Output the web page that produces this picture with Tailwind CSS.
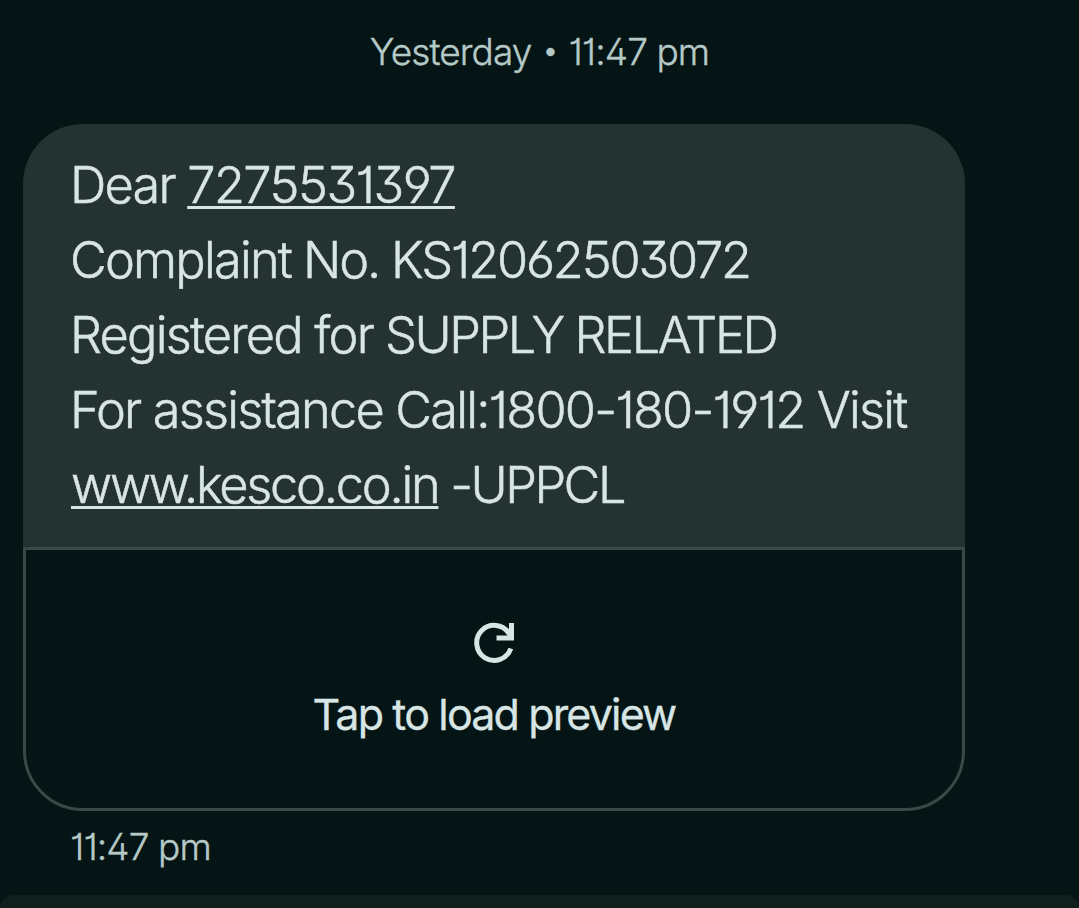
<!DOCTYPE html>
<html lang="en">
  <head>
    <meta charset="utf-8" />
    <meta content="width=device-width, initial-scale=1.0" name="viewport" />
    <title>Messages</title>
    <script src="https://cdn.jsdelivr.net/npm/@tailwindcss/browser@4"></script>
  </head>
  <body class="bg-[#051414] h-[908px] overflow-hidden flex flex-col font-['Inter',sans-serif] [font-feature-settings:'ss01','cv01','cv09']">
    <div class="pt-7 h-[124px] shrink-0 text-center text-[37px] leading-[48px] font-light text-[#b5c9c7] tracking-[-0.9px] [-webkit-text-stroke:0.4px]">
      Yesterday <span class="text-[30px] leading-none align-[4px] mx-px">•</span> 11:47 pm
    </div>
    <main class="ml-[23px] w-[942px] shrink-0">
      <div class="h-[423px] bg-[#253232] rounded-t-[60px] pl-12 pt-[23px] text-[50.5px] leading-[75px] font-light text-[#d7e5e4] whitespace-nowrap [-webkit-text-stroke:0.5px]">
        <p class="-ml-px tracking-[-1.8px]">Dear <a class="tracking-[-1.55px] underline decoration-[3px] underline-offset-[3px] [text-decoration-skip-ink:none]">7275531397</a></p>
        <p class="-ml-px tracking-[-2.2px]"><span class="tracking-[-1.8px]">Complaint</span> No. KS12062503072</p>
        <p class="-ml-px tracking-[-2.4px]"><span class="tracking-[-1.8px]">Registered for</span> SUPPLY RELATED</p>
        <p class="-ml-px tracking-[-1.8px]">For assistance Call:1800-180-1912 Visit</p>
        <p class="tracking-[-2.5px]"><a class="tracking-[-2.25px] underline decoration-[3px] underline-offset-[3px] [text-decoration-skip-ink:none]">www.kesco.co.in</a> -UPPCL</p>
      </div>
      <div class="h-[264px] border-[3px] border-[#394948] rounded-b-[60px] flex flex-col items-center pt-[67px] text-[#d7e5e4]">
        <svg class="w-[60px] h-[52px]" viewBox="464 617 60 52" fill="none" stroke="currentColor" stroke-width="5">
          <path d="M510.800 648.500A17.500 17.500 0 1 1 509 633.500L512 637.500" />
          <path d="M511.500 623V638H496.500" />
        </svg>
        <p class="mt-[15px] text-[43px] leading-[60px] tracking-[-1.85px] [-webkit-text-stroke:0.3px]">Tap to load preview</p>
      </div>
    </main>
    <p class="ml-[70px] mt-[12px] h-[72px] shrink-0 text-[37px] leading-[48px] font-light text-[#b5c9c7] tracking-[-0.9px] [-webkit-text-stroke:0.4px]">11:47 pm</p>
    <div class="h-[13px] overflow-hidden shrink-0 bg-[#101e1e] rounded-t-[14px]"></div>
  </body>
</html>
